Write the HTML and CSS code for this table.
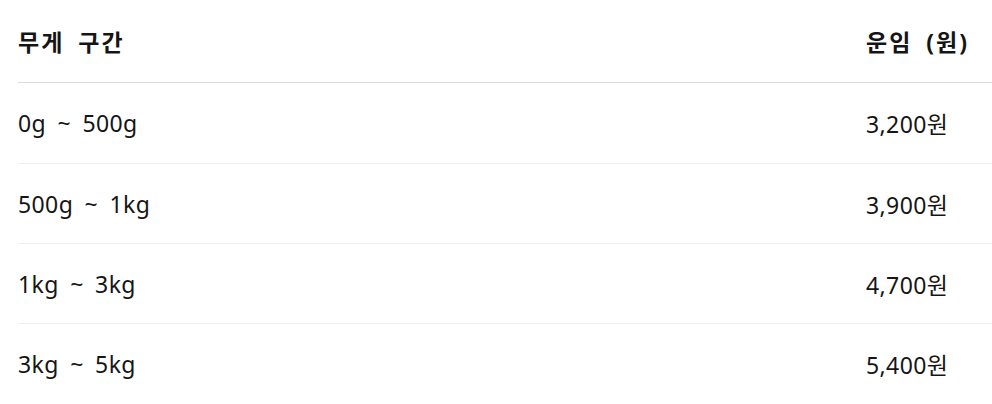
FILE: index.html
```html
<!DOCTYPE html>
<html lang="ko">
<head>
<meta charset="utf-8">
<link rel="stylesheet" href="styles.css">
</head>
<body>
<div class="table">
  <div class="row head">
    <div class="cell">무게 구간</div>
    <div class="cell">운임 (원)</div>
  </div>
  <div class="row first">
    <div class="cell">0g ~ 500g</div>
    <div class="cell">3,200원</div>
  </div>
  <div class="row">
    <div class="cell">500g ~ 1kg</div>
    <div class="cell">3,900원</div>
  </div>
  <div class="row">
    <div class="cell">1kg ~ 3kg</div>
    <div class="cell">4,700원</div>
  </div>
  <div class="row last">
    <div class="cell">3kg ~ 5kg</div>
    <div class="cell">5,400원</div>
  </div>
</div>
</body>
</html>
```
FILE: styles.css
```css
html, body {
  margin: 0;
  padding: 0;
  background: #fff;
  overflow: hidden;
}
body {
  font-family: "Noto Sans", "Noto Sans CJK KR", sans-serif;
  color: #151515;
}
.table {
  padding-left: 18px;
}
.row {
  display: grid;
  grid-template-columns: 848px 1fr;
  align-items: center;
  box-sizing: border-box;
  height: 80px;
  border-bottom: 1px solid #f0f0f0;
  font-size: 23px;
  letter-spacing: 0.4px;
  word-spacing: 5px;
}
.row.first {
  height: 81px;
}
.row.head {
  height: 83px;
  border-bottom: 1px solid #dcdcdc;
  font-weight: 700;
  letter-spacing: 2px;
  word-spacing: 6px;
}
.row.last {
  border-bottom: none;
}
```
